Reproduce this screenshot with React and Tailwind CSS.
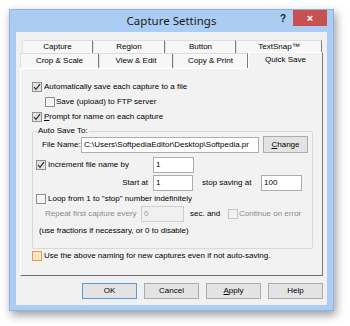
import React from 'react';

const body = { fontFamily: '"Liberation Sans", Arial, sans-serif' };

const Check = ({ checked, disabled, focus }) => {
  let cls = 'border-[#8e8f8f] bg-[#f4f4f4]';
  if (checked) cls = 'border-[#8e8f8f] bg-[#e2e2e2]';
  if (disabled) cls = 'border-[#c6c6c6] bg-[#f2f2f2]';
  if (focus) cls = 'border-[#e3a04c] bg-[#fbe6c6]';
  return (
    <span className={`flex h-[10px] w-[10px] shrink-0 items-center justify-center border ${cls}`}>
      {checked && (
        <svg width="8" height="8" viewBox="0 0 8 8">
          <path d="M1 4.2 L3 6.4 L7 1.2" fill="none" stroke="#2b2b2b" strokeWidth="1.2" />
        </svg>
      )}
    </span>
  );
};

const Field = ({ value, className, disabled }) => (
  <div
    className={`flex h-[16px] shrink-0 items-center overflow-hidden whitespace-nowrap border pl-[2px] ${
      disabled ? 'border-[#cfcfcf] bg-[#f0f0f0] text-[#9a9a9a]' : 'border-[#abadb3] bg-white text-black'
    } ${className}`}
  >
    {value}
  </div>
);

const Tab = ({ label, className = '' }) => (
  <div
    className={`flex items-center justify-center rounded-tl-[2px] border-l border-t border-r border-l-[#e2e2e2] border-t-[#dcdcdc] border-r-[#7c7c7c] bg-[#f7f7f7] ${className}`}
  >
    {label}
  </div>
);

const Btn = ({ children, primary, className = '' }) => (
  <button
    className={`flex h-[16px] items-center justify-center border bg-[#e3e3e3] text-black ${
      primary ? 'border-[#5d9ad6]' : 'border-[#acacac]'
    } ${className}`}
  >
    {children}
  </button>
);

export default function App() {
  return (
    <div className="h-[326px] w-[350px] overflow-hidden bg-white pl-[9px] pt-[9px]" style={body}>
      <div className="flex h-[302px] w-[325px] flex-col border border-[#8fb3de] bg-[#abcdf3] px-[6px] pb-[5px] shadow-[2px_4px_9px_rgba(0,0,0,0.4)]">
        {/* Title bar */}
        <div className="grid h-[22px] grid-cols-[1fr_auto_1fr] items-start">
          <div />
          <div
            className="pt-[4px] text-[11.5px] leading-[14px] text-[#1a1a1a]"
            style={{ fontFamily: '"Noto Sans", "Open Sans", sans-serif' }}
          >
            Capture Settings
          </div>
          <div className="flex items-start justify-end">
            <span className="mr-[7px] mt-[3px] text-[10px] font-bold leading-[12px] text-[#222]">?</span>
            <span className="flex h-[16px] w-[34px] items-center justify-center bg-[#c75050] text-[11px] font-bold leading-none text-white">
              ×
            </span>
          </div>
        </div>

        {/* Client */}
        <div className="flex flex-1 flex-col bg-[#f0f0f0] px-[4px] pt-[8px] text-[8px] leading-[10px] text-black">
          <div className="flex h-[13px] pl-[2px]">
            <Tab label="Capture" className="w-[71px]" />
            <Tab label="Region" className="w-[72px]" />
            <Tab label="Button" className="w-[71px]" />
            <Tab label="TextSnap™" className="w-[86px]" />
          </div>
          <div className="flex h-[15px] items-start">
            <Tab label="Crop & Scale" className="h-[15px] w-[79px]" />
            <Tab label="View & Edit" className="h-[15px] w-[74px]" />
            <Tab label="Copy & Print" className="h-[15px] w-[75px]" />
            <div className="relative z-10 -mt-[1px] flex h-[17px] w-[75px] items-start justify-center border-l border-r border-t border-l-white border-t-white border-r-[#7c7c7c] bg-[#f2f2f2] pt-[2px]">
              Quick Save
            </div>
          </div>

          {/* Panel */}
          <div className="flex h-[208px] flex-col border border-l-white border-t-white border-r-[#7c7c7c] border-b-[#6e6e6e] bg-[#f2f2f2] pt-[10px]">
            <div className="flex h-[15px] items-center pl-[11px]">
              <Check checked />
              <span className="ml-[2px]">Automatically save each capture to a file</span>
            </div>
            <div className="flex h-[15px] items-center pl-[24px]">
              <Check />
              <span className="ml-[1px]">Save (upload) to FTP server</span>
            </div>
            <div className="flex h-[15px] items-center pl-[11px]">
              <Check checked />
              <span className="ml-[2px]">
                <u>P</u>rompt for name on each capture
              </span>
            </div>

            <fieldset className="ml-[11px] mr-[9px] mt-[2px] rounded-[2px] border border-[#d8d8d8] pb-[10px]">
              <legend className="ml-[4px] px-[1px] leading-[10px]">Auto Save To:</legend>
              <div className="flex h-[17px] items-center pl-[9px]">
                <span className="w-[39px] whitespace-nowrap">File Name:</span>
                <Field value="C:\Users\SoftpediaEditor\Desktop\Softpedia.pr" className="w-[178px]" />
                <Btn className="ml-[4px] h-[17px] w-[45px]">
                  <u>C</u>hange
                </Btn>
              </div>
              <div className="mt-[4px] flex h-[16px] items-center pl-[3px]">
                <Check checked />
                <span className="ml-[2px] w-[105px]">Increment file name by</span>
                <Field value="1" className="w-[41px]" />
              </div>
              <div className="mt-[2px] flex h-[16px] items-center">
                <span className="w-[120px] pr-[5px] text-right">Start at</span>
                <Field value="1" className="w-[40px]" />
                <span className="ml-[9px] w-[59px] whitespace-nowrap">stop saving at</span>
                <Field value="100" className="w-[41px]" />
              </div>
              <div className="mt-[1px] flex h-[14px] items-center pl-[3px]">
                <Check />
                <span className="ml-[2px] whitespace-nowrap">Loop from 1 to "stop" number indefinitely</span>
              </div>
              <div className="flex h-[16px] items-center pl-[12px] text-[#8a8a8a]">
                <span className="w-[96px] whitespace-nowrap">Repeat first capture every</span>
                <Field value="0" disabled className="w-[43px]" />
                <span className="ml-[6px] w-[38px] text-black">sec. and</span>
                <Check disabled />
                <span className="ml-[1px] whitespace-nowrap">Continue on error</span>
              </div>
              <div className="mt-[2px] flex h-[14px] items-center pl-[6px]">
                (use fractions if necessary, or 0 to disable)
              </div>
            </fieldset>

            <div className="flex h-[14px] items-center pl-[11px]">
              <Check focus />
              <span className="ml-[2px]">Use the above naming for new captures even if not auto-saving.</span>
            </div>
          </div>

          {/* Buttons */}
          <div className="mt-[7px] flex justify-end gap-[7px]">
            <Btn primary className="w-[55px]">OK</Btn>
            <Btn className="w-[55px]">Cancel</Btn>
            <Btn className="w-[55px]">
              <u>A</u>pply
            </Btn>
            <Btn className="w-[55px]">Help</Btn>
          </div>
        </div>
      </div>
    </div>
  );
}
